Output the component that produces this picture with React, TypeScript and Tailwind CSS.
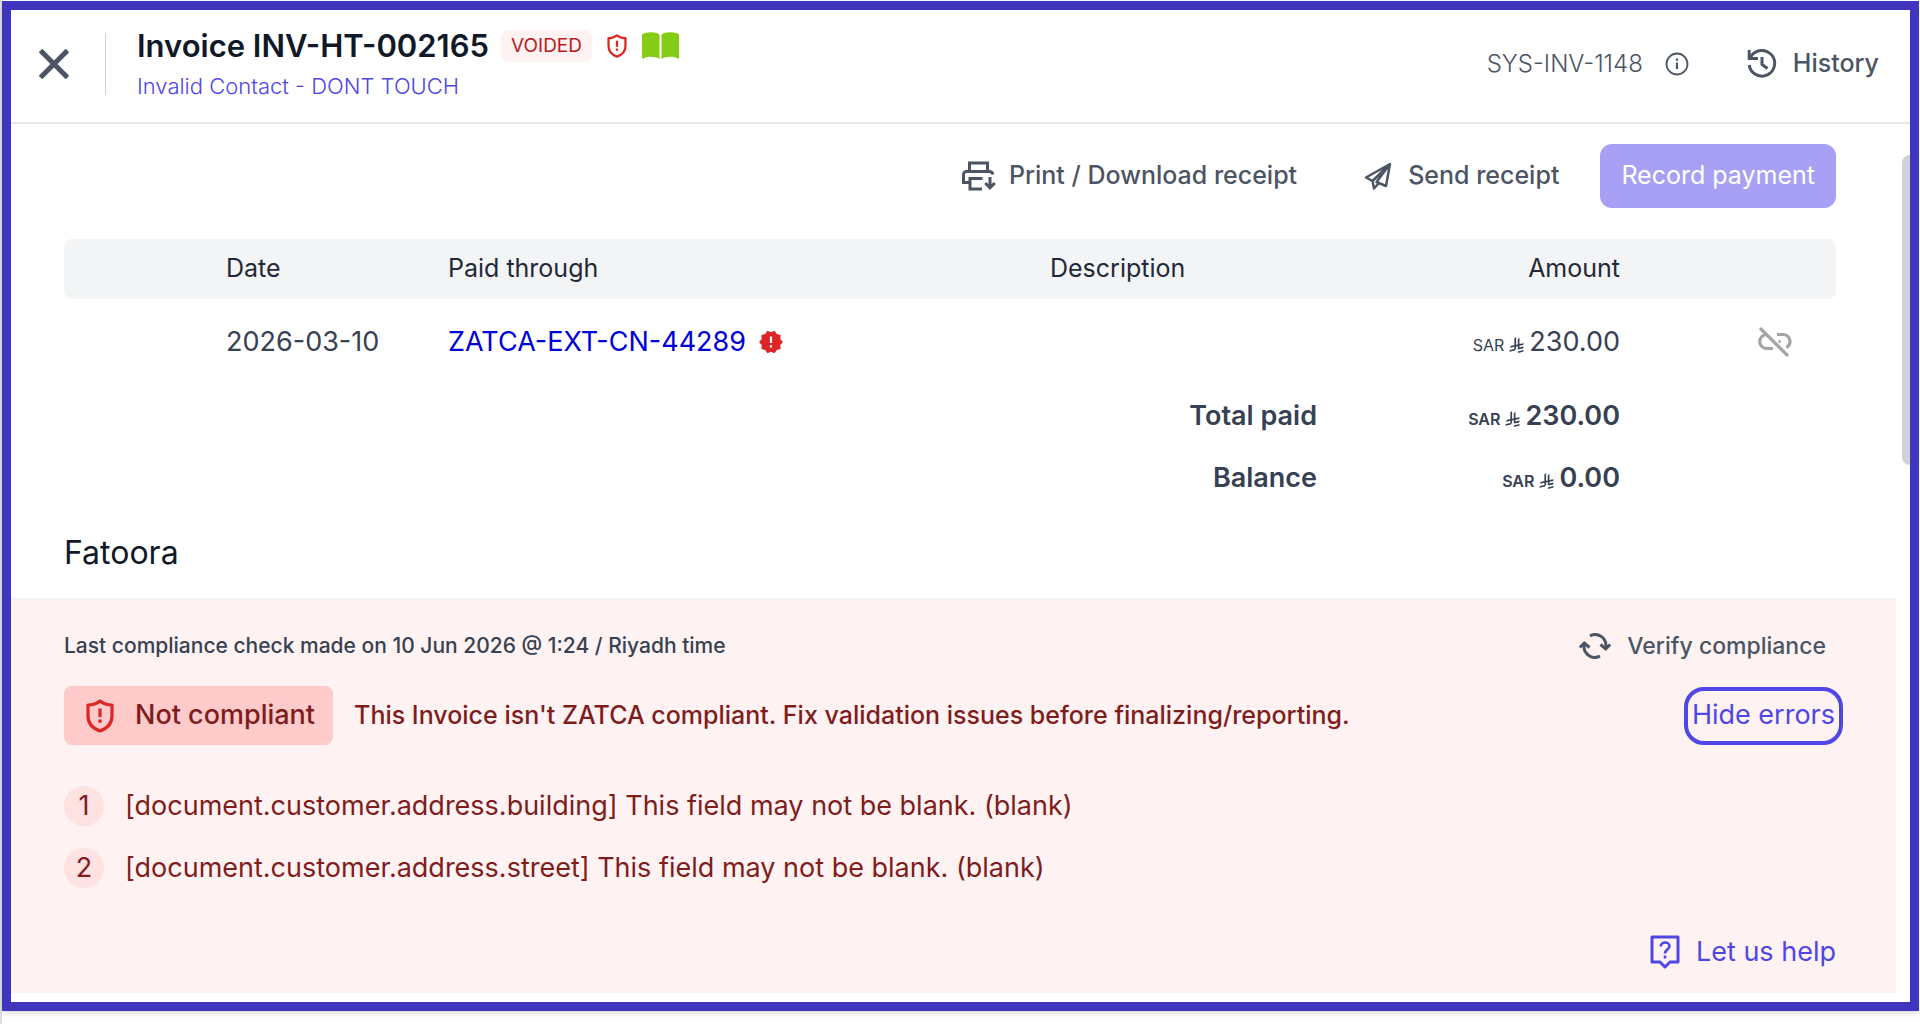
import type { ReactNode } from 'react';
import { MdNewReleases } from 'react-icons/md';

const ERRORS = [
  '[document.customer.address.building] This field may not be blank. (blank)',
  '[document.customer.address.street] This field may not be blank. (blank)',
];

function ShieldIcon({ className }: { className: string }) {
  return (
    <svg viewBox="0 0 28 34" className={className} fill="none" stroke="currentColor" strokeWidth={3.2} strokeLinejoin="round" aria-hidden="true">
      <path d="M14 2C10.500 4.800 6.500 6 2 6V17c0 8 5 12.500 12 15 7-2.500 12-7 12-15V6C21.500 6 17.500 4.800 14 2z" />
      <path d="M14 9.500V18M14 20.500v3.200" />
    </svg>
  );
}

function BookIcon() {
  return (
    <svg viewBox="0 0 37 28" className="h-7 w-[37px] text-[#84cc16]" fill="currentColor" aria-hidden="true">
      <path d="M0 3.500C0 2 1 1.500 2 1.200 7-.3 14-.3 17.500 2.500V27C14 24.500 5 24 1.500 26.500.500 27 0 26.500 0 26z" />
      <path d="M37 3.500C37 2 36 1.500 35 1.200 30-.3 23-.3 19.500 2.500V27c3.500-2.500 12.500-3 16-.5 1 .5 1.500 0 1.500-.5z" />
    </svg>
  );
}

function CloseIcon() {
  return (
    <svg viewBox="0 0 30 30" className="size-[30px]" fill="none" stroke="currentColor" strokeWidth={5} aria-hidden="true">
      <path d="M1.500 1.500l27 27M28.500 1.500l-27 27" />
    </svg>
  );
}

function InfoIcon() {
  return (
    <svg viewBox="0 0 24 24" className="size-6" fill="none" stroke="currentColor" strokeWidth={1.8} aria-hidden="true">
      <circle cx="12" cy="12" r="10.500" />
      <path d="M12 10.500V17M12 6.500v2.200" strokeWidth={2.2} />
    </svg>
  );
}

function HistoryIcon() {
  return (
    <svg viewBox="0 0 30 30" className="size-[30px]" fill="none" stroke="currentColor" strokeWidth={3} aria-hidden="true">
      <path d="M2.200 1v8.500H11" />
      <path d="M3 9.500A12.800 12.800 0 1 1 2.200 16" />
      <path d="M15 8v7.500l5.500 4" />
    </svg>
  );
}

function PrintIcon() {
  return (
    <svg viewBox="0 0 34 30" className="h-[30px] w-[34px]" fill="none" stroke="currentColor" strokeWidth={3} aria-hidden="true">
      <path d="M7.500 10.500V2h18v8.500" />
      <path d="M7 21.500H1.500V13.500a3 3 0 0 1 3-3H27a4 4 0 0 1 4 3" />
      <path d="M20.500 17.500H8V28h12" />
      <path d="M28 16v10.500M23.200 22l4.800 4.800 4.800-4.800" />
    </svg>
  );
}

function SendIcon() {
  return (
    <svg viewBox="0 0 28 28" className="size-7" fill="none" stroke="currentColor" strokeWidth={2.5} strokeLinejoin="round" aria-hidden="true">
      <path d="M26 2L2 15.500l6.500 3.500L26 2l-4 22-9.500-4L26 2M8.500 19l1.500 7.500 5-5.500" />
    </svg>
  );
}

function UnlinkIcon() {
  return (
    <svg viewBox="0 0 34 30" className="h-[30px] w-[34px]" fill="none" stroke="currentColor" strokeWidth={3.2} aria-hidden="true">
      <path d="M8.500 7.500a7 7 0 0 0 .5 14h6" />
      <path d="M19 7.500h6a7 7 0 0 1 3.500 13" />
      <path d="M20.500 14.500h2" />
      <path d="M2 1l28 28" />
    </svg>
  );
}

function VerifyIcon() {
  return (
    <svg viewBox="0 0 32 26" className="h-[26px] w-8" fill="none" stroke="currentColor" strokeWidth={3} aria-hidden="true">
      <path d="M11 2.800A11 11 0 0 1 27 13v2.500M21.500 11.500l5.200 4.500 4.500-4.500" />
      <path d="M21 23.200A11 11 0 0 1 5 13v-2.500M.800 14.500L5.300 10l5.200 4.500" />
    </svg>
  );
}

function HelpIcon() {
  return (
    <svg viewBox="0 0 30 34" className="h-[34px] w-[30px]" fill="none" stroke="currentColor" strokeWidth={3} strokeLinejoin="round" aria-hidden="true">
      <path d="M2 2h26v25h-8l-5 5-5-5H2z" />
      <path d="M10.800 11.500c0-5.500 8.700-5 8.700-.300 0 3-4.500 3.300-4.500 7.300M15 20.500v3" strokeWidth={2.6} />
    </svg>
  );
}

function RiyalIcon() {
  return (
    <svg viewBox="0 0 1124 1256" className="mx-[5px] inline h-4 w-[15px] align-[-2px]" fill="currentColor" aria-hidden="true">
      <path d="M699.620 1113.020c-20.060 44.480-33.320 92.750-38.400 143.370l424.510-90.240c20.060-44.470 33.310-92.750 38.400-143.370l-424.510 90.240z" />
      <path d="M1085.730 895.800c20.060-44.470 33.320-92.750 38.400-143.370l-330.680 70.330v-135.200l292.270-62.110c20.060-44.470 33.320-92.750 38.400-143.370l-330.680 70.270V66.130c-50.670 28.450-95.670 66.320-132.250 110.990v403.350l-132.250 28.110V0c-50.670 28.440-95.670 66.320-132.250 110.990v525.690l-295.910 62.880c-20.060 44.470-33.330 92.750-38.420 143.370l334.330-71.050v170.260l-358.300 76.140c-20.060 44.470-33.320 92.750-38.400 143.370l375.040-79.700c30.530-6.350 56.770-24.400 73.830-49.240l68.780-101.970c7.140-10.570 11.300-23.290 11.300-36.990v-149.980l132.250-28.110v270.400l424.530-90.280z" />
    </svg>
  );
}

function Money({ value }: { value: string }) {
  return (
    <span className="whitespace-nowrap">
      <span className="text-base">SAR</span>
      <RiyalIcon />
      {value}
    </span>
  );
}

function Header() {
  return (
    <header className="flex items-center justify-between border-b-2 border-[#e5e7eb] pt-4 pr-[31px] pb-5 pl-7">
      <div className="flex items-center">
        <button type="button" aria-label="Close" className="text-[#4b5563]">
          <CloseIcon />
        </button>
        <div className="ml-9 h-[62px] w-px bg-[#d1d5db]" />
        <div className="ml-[31px]">
          <div className="flex items-center">
            <h1 className="text-[31px] leading-10 font-semibold text-[#111827]">Invoice INV-HT-002165</h1>
            <span className="ml-3 rounded-lg bg-[#fef2f2] px-[10px] text-[19px] leading-8 text-[#b91c1c]">VOIDED</span>
            <ShieldIcon className="mx-[15px] h-6 w-5 text-[#dc2626]" />
            <BookIcon />
          </div>
          <a href="#contact" className="mt-1 block text-[22px] leading-8 font-light text-[#4f46e5]">
            Invalid Contact - DONT TOUCH
          </a>
        </div>
      </div>
      <div className="flex items-center text-[#4b5563]">
        <span className="text-2xl font-light">SYS-INV-1148</span>
        <button type="button" aria-label="Invoice information" className="ml-[22px]">
          <InfoIcon />
        </button>
        <button type="button" className="ml-[58px] flex items-center gap-4 text-[25px] font-medium">
          <HistoryIcon />
          History
        </button>
      </div>
    </header>
  );
}

function Toolbar() {
  return (
    <div className="flex items-center justify-end text-[25px] font-medium text-[#4b5563]">
      <button type="button" className="flex items-center gap-[13px]">
        <PrintIcon />
        Print / Download receipt
      </button>
      <button type="button" className="mr-[41px] ml-[67px] flex items-center gap-4">
        <SendIcon />
        Send receipt
      </button>
      <button type="button" className="h-16 rounded-xl bg-[#a8a0f4] px-[21px] font-normal text-white">
        Record payment
      </button>
    </div>
  );
}

function TotalRow({ label, children }: { label: string; children: ReactNode }) {
  return (
    <tr className="h-[62px] text-right font-semibold">
      <td colSpan={4}>{label}</td>
      <td>{children}</td>
      <td />
    </tr>
  );
}

function PaymentsTable() {
  return (
    <table className="mt-[31px] w-full table-fixed text-[27px] text-[#374151]">
      <colgroup>
        <col className="w-[162px]" />
        <col className="w-[222px]" />
        <col />
        <col className="w-[267px]" />
        <col className="w-[303px]" />
        <col className="w-[216px]" />
      </colgroup>
      <thead>
        <tr className="h-[60px] bg-[#f3f4f6] text-left text-[25px] text-[#1f2937]">
          <th className="rounded-l-lg" aria-label="Select" />
          <th className="font-normal">Date</th>
          <th className="font-normal">Paid through</th>
          <th className="font-normal">Description</th>
          <th className="text-right font-normal">Amount</th>
          <th className="rounded-r-lg" aria-label="Actions" />
        </tr>
      </thead>
      <tbody>
        <tr className="h-[86px]">
          <td />
          <td>2026-03-10</td>
          <td>
            <div className="flex items-center gap-3">
              <a href="#credit-note" className="text-[#0000d8]">ZATCA-EXT-CN-44289</a>
              <MdNewReleases className="size-[26px] text-[#dc2626]" />
            </div>
          </td>
          <td />
          <td className="text-right">
            <Money value="230.00" />
          </td>
          <td>
            <div className="flex justify-end pr-11">
              <button type="button" aria-label="Unlink payment" className="text-[#a3a3a8]">
                <UnlinkIcon />
              </button>
            </div>
          </td>
        </tr>
        <TotalRow label="Total paid">
          <Money value="230.00" />
        </TotalRow>
        <TotalRow label="Balance">
          <Money value="0.00" />
        </TotalRow>
      </tbody>
    </table>
  );
}

function Compliance() {
  return (
    <section className="mr-[14px] border-t-2 border-[#f3f4f6] bg-[#fef2f2] pt-7 pr-[60px] pb-5 pl-[53px]">
      <div className="flex items-center justify-between pr-[10px]">
        <p className="text-[21px] font-medium text-[#374151]">
          Last compliance check made on 10 Jun 2026 @ 1:24 / Riyadh time
        </p>
        <button type="button" className="flex items-center gap-4 text-[23px] leading-9 font-medium text-[#4b5563]">
          <VerifyIcon />
          Verify compliance
        </button>
      </div>
      <div className="mt-[22px] flex items-center justify-between">
        <div className="flex items-center gap-[21px] font-medium text-[#7f1d1d]">
          <span className="flex h-[59px] items-center gap-[21px] rounded-lg bg-[#fecaca] pr-[18px] pl-[22px] text-[27px]">
            <ShieldIcon className="h-[34px] w-7 text-[#dc2626]" />
            Not compliant
          </span>
          <p className="text-[25px]">
            This Invoice isn't ZATCA compliant. Fix validation issues before finalizing/reporting.
          </p>
        </div>
        <button type="button" className="-mr-[7px] h-[58px] rounded-[20px] border-4 border-[#4f46e5] px-1 text-[27px] text-[#4f46e5]">
          Hide errors
        </button>
      </div>
      <ol className="mt-[41px] flex flex-col gap-[22px]">
        {ERRORS.map((error, i) => (
          <li key={error} className="flex items-center gap-[21px] text-[27px] leading-10 text-[#7f1d1d]">
            <span className="flex size-10 items-center justify-center rounded-full bg-[#fee2e2]">{i + 1}</span>
            {error}
          </li>
        ))}
      </ol>
      <div className="mt-11 flex justify-end">
        <button type="button" className="flex items-center gap-4 text-[27px] text-[#4f46e5]">
          <HelpIcon />
          Let us help
        </button>
      </div>
    </section>
  );
}

export default function App() {
  return (
    <div className="min-h-screen border-l-2 border-[#dcdce4] bg-white pt-px pr-px font-['Inter',sans-serif]">
      <div className="relative border-[9px] border-[#4036be] bg-white pb-[9px] shadow-md">
        <Header />
        <main>
          <div className="pt-5 pr-[74px] pl-[53px]">
            <Toolbar />
            <PaymentsTable />
            <h2 className="mt-6 mb-[25px] text-[32px] leading-10 text-[#111827]">Fatoora</h2>
          </div>
          <Compliance />
        </main>
        <div className="absolute top-[145px] right-0 h-[310px] w-2 rounded-l-lg bg-[#d0d0da]" />
      </div>
    </div>
  );
}
